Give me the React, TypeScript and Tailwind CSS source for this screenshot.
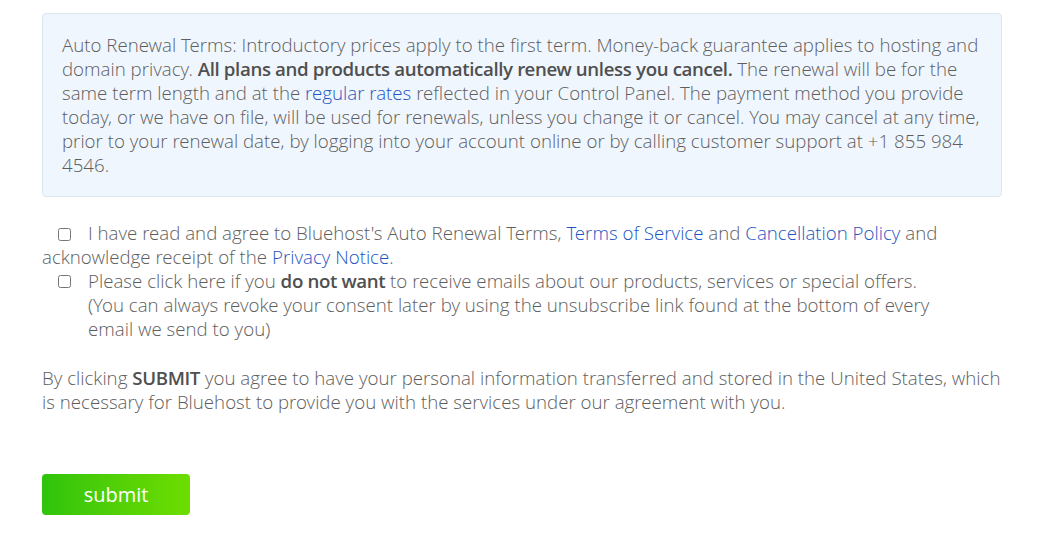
const light = { fontFamily: '"Open Sans Light", "Open Sans", sans-serif' };
const semi = { fontFamily: '"Open Sans Semibold", "Open Sans SemiBold", "Open Sans", sans-serif' };

function Strong({ children }: { children: React.ReactNode }) {
  return (
    <span className="font-semibold tracking-[-0.37px] text-[#505050]" style={semi}>
      {children}
    </span>
  );
}

export default function App() {
  return (
    <div
      className="bg-white px-[42px] pt-[13px] text-[18.7px] font-light leading-[24px] text-[#5e5e5e] w-[1061px] h-[536px]"
      style={light}
    >
      <div className="w-[960px] rounded-[4px] border border-[#dde5ee] bg-[#f0f6fe] pl-[19px] pr-[14px] pt-[19px] pb-[19px]">
        Auto Renewal Terms: Introductory prices apply to the first term. Money-back guarantee applies to hosting and
        domain privacy. <Strong>All plans and products automatically renew unless you cancel.</Strong> The renewal will
        be for the same term length and at the <a className="text-[#1d56c2]">regular rates</a> reflected in your
        Control Panel. The payment method you provide today, or we have on file, will be used for renewals, unless you
        change it or cancel. You may cancel at any time, prior to your renewal date, by logging into your account online
        or by calling customer support at +1 855 984 4546.
      </div>

      <div className="mt-[24px] w-[960px]">
        <label className="block">
          <input type="checkbox" className="ml-[16px] mr-[17px] h-[13px] w-[13px] align-[-1px]" />
          I have read and agree to Bluehost's Auto Renewal Terms, <a className="text-[#1d56c2]">Terms of Service</a> and{' '}
          <a className="text-[#1d56c2]">Cancellation Policy</a> and acknowledge receipt of the{' '}
          <a className="text-[#1d56c2]">Privacy Notice</a>.
        </label>
        <label className="flex">
          <span className="flex h-[24px] w-[46px] shrink-0 items-center pl-[16px]">
            <input type="checkbox" className="h-[13px] w-[13px]" />
          </span>
          <span className="w-[860px]">
            Please click here if you <Strong>do not want</Strong> to receive emails about our products, services or
            special offers. (You can always revoke your consent later by using the unsubscribe link found at the bottom
            of every email we send to you)
          </span>
        </label>
      </div>

      <p className="mt-[25px] w-[965px]">
        By clicking <Strong>SUBMIT</Strong> you agree to have your personal information transferred and stored in the
        United States, which is necessary for Bluehost to provide you with the services under our agreement with you.
      </p>

      <button
        className="mt-[60px] h-[41px] w-[148px] rounded-[4px] bg-gradient-to-r from-[#2ec30c] to-[#6ddd00] text-[20px] font-normal text-white"
        style={{ fontFamily: '"Open Sans", sans-serif' }}
      >
        submit
      </button>
    </div>
  );
}
